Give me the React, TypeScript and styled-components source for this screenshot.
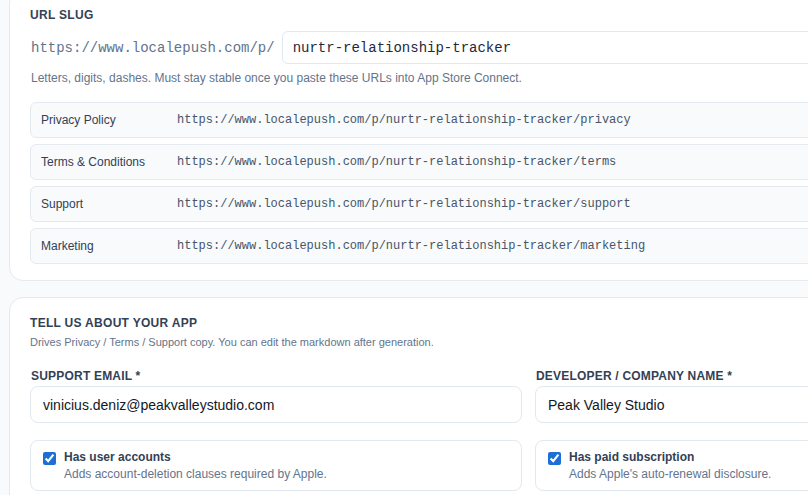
import styled, { createGlobalStyle } from "styled-components";

const GlobalStyle = createGlobalStyle`
    html, body {
        margin: 0;
        padding: 0;
        background-color: #f8fafc;
        overflow: hidden;
    }
    body {
        font-family: "Liberation Sans", Arial, sans-serif;
        color: #1e293b;
    }
`

// the page is scrolled a little, so the first card starts above the fold
const Page = styled.div`
    width: 1039px;
    margin-top: -11px;
    padding: 0 0 0 9px;
    display: flex;
    flex-direction: column;
    gap: 16px;
`

const Card = styled.section`
    background-color: #FFFFFF;
    border: 1px solid #e5e9f0;
    border-radius: 14px;
    padding: 17px 20px 16px;
    display: flex;
    flex-direction: column;
`

const SectionTitle = styled.h2`
    margin: 0;
    font-size: 12px;
    font-weight: 700;
    letter-spacing: 0.3px;
    text-transform: uppercase;
    color: #334155;
    line-height: 16px;
`

const SectionNote = styled.p`
    margin: 4px 0 0;
    font-size: 11px;
    color: #64748b;
    line-height: 14px;
`

const Mono = `"Liberation Mono", "DejaVu Sans Mono", monospace`

const SlugRow = styled.div`
    margin-top: 8px;
    display: flex;
    align-items: center;
    gap: 7px;
    >span{
        font-family: ${Mono};
        font-size: 14px;
        color: #64748b;
        padding-left: 1px;
    }
    >input{
        flex: 1;
        height: 33px;
        box-sizing: border-box;
        border: 1px solid #e2e8f0;
        border-radius: 6px;
        padding: 0 10px;
        font-family: ${Mono};
        font-size: 14px;
        color: #1e293b;
        outline: none;
    }
`

const Hint = styled.p`
    margin: 7px 0 0 1px;
    font-size: 12px;
    color: #64748b;
    line-height: 14px;
`

const LinkList = styled.ul`
    list-style: none;
    margin: 17px 0 0;
    padding: 0;
    display: flex;
    flex-direction: column;
    gap: 6px;
`

const LinkRow = styled.li`
    height: 36px;
    box-sizing: border-box;
    display: flex;
    align-items: center;
    background-color: #f8fafc;
    border: 1px solid #e5e9f0;
    border-radius: 6px;
    padding: 0 10px;
    >b{
        width: 136px;
        font-weight: 400;
        font-size: 12px;
        color: #334155;
    }
    >code{
        font-family: ${Mono};
        font-size: 12px;
        color: #475569;
    }
`

const FieldGrid = styled.div`
    margin-top: 20px;
    display: grid;
    grid-template-columns: 1fr 1fr;
    column-gap: 13px;
    row-gap: 17px;
`

const Field = styled.label`
    display: flex;
    flex-direction: column;
    >span{
        font-size: 12px;
        font-weight: 700;
        letter-spacing: 0.2px;
        text-transform: uppercase;
        color: #334155;
        line-height: 14px;
        margin: 0 0 3px 1px;
    }
    >input{
        height: 37px;
        box-sizing: border-box;
        border: 1px solid #e2e8f0;
        border-radius: 8px;
        padding: 0 12px;
        font-family: "Liberation Sans", Arial, sans-serif;
        font-size: 14px;
        color: #111827;
        outline: none;
    }
`

const Toggle = styled.label`
    display: flex;
    align-items: flex-start;
    gap: 8px;
    border: 1px solid #e2e8f0;
    border-radius: 8px;
    padding: 9px 12px 8px;
    >input{
        margin: 2px 0 0;
        width: 13px;
        height: 13px;
        accent-color: #1d6fd6;
    }
    >div{
        display: flex;
        flex-direction: column;
        gap: 2px;
        b{
            font-size: 12px;
            font-weight: 700;
            color: #334155;
            line-height: 15px;
        }
        small{
            font-size: 12px;
            color: #64748b;
            line-height: 15px;
        }
    }
`

const slug = "nurtr-relationship-tracker"
const base = "https://www.localepush.com/p/"

const pages = [
    { label: "Privacy Policy", path: "privacy" },
    { label: "Terms & Conditions", path: "terms" },
    { label: "Support", path: "support" },
    { label: "Marketing", path: "marketing" },
]

function App() {
    return <>
        <GlobalStyle />
        <Page>
            <Card>
                <SectionTitle>URL slug</SectionTitle>
                <SlugRow>
                    <span>{base}</span>
                    <input defaultValue={slug} />
                </SlugRow>
                <Hint>Letters, digits, dashes. Must stay stable once you paste these URLs into App Store Connect.</Hint>
                <LinkList>
                    {pages.map(p => <LinkRow key={p.path}>
                        <b>{p.label}</b>
                        <code>{base}{slug}/{p.path}</code>
                    </LinkRow>)}
                </LinkList>
            </Card>
            <Card>
                <SectionTitle>Tell us about your app</SectionTitle>
                <SectionNote>Drives Privacy / Terms / Support copy. You can edit the markdown after generation.</SectionNote>
                <FieldGrid>
                    <Field>
                        <span>Support email *</span>
                        <input defaultValue="vinicius.deniz@peakvalleystudio.com" />
                    </Field>
                    <Field>
                        <span>Developer / company name *</span>
                        <input defaultValue="Peak Valley Studio" />
                    </Field>
                    <Toggle>
                        <input type="checkbox" defaultChecked />
                        <div>
                            <b>Has user accounts</b>
                            <small>Adds account-deletion clauses required by Apple.</small>
                        </div>
                    </Toggle>
                    <Toggle>
                        <input type="checkbox" defaultChecked />
                        <div>
                            <b>Has paid subscription</b>
                            <small>Adds Apple's auto-renewal disclosure.</small>
                        </div>
                    </Toggle>
                </FieldGrid>
            </Card>
        </Page>
    </>
}
export default App;
